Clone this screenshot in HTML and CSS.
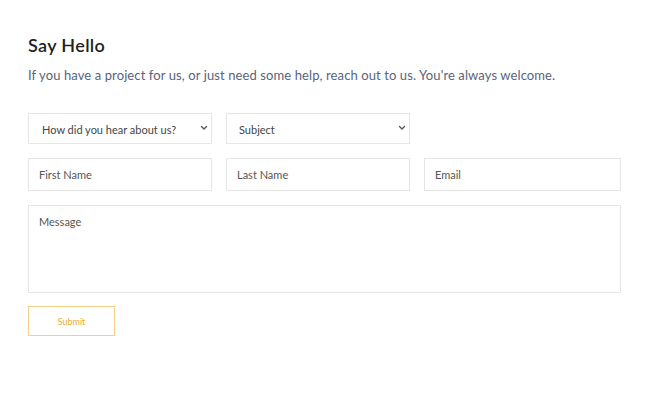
FILE: index.html
```html
<!DOCTYPE html>
<html lang="en">
<head>
<meta charset="utf-8">
<title>Say Hello</title>
<link rel="stylesheet" href="styles.css">
</head>
<body>
<main class="contact">
  <h1 class="title">Say Hello</h1>
  <p class="lead">If you have a project for us, or just need some help, reach out to us. You're always welcome.</p>
  <form class="form">
    <div class="row row-selects">
      <div class="select-wrap">
        <select class="field select select-first">
          <option>How did you hear about us?</option>
        </select>
        <svg class="chev" width="8" height="6" viewBox="0 0 8 6"><path d="M1.5 1.5 L4 4 L6.5 1.5" fill="none" stroke="#555" stroke-width="1.4" stroke-linecap="round" stroke-linejoin="round"/></svg>
      </div>
      <div class="select-wrap">
        <select class="field select">
          <option>Subject</option>
        </select>
        <svg class="chev" width="8" height="6" viewBox="0 0 8 6"><path d="M1.5 1.5 L4 4 L6.5 1.5" fill="none" stroke="#555" stroke-width="1.4" stroke-linecap="round" stroke-linejoin="round"/></svg>
      </div>
    </div>
    <div class="row row-inputs">
      <input class="field input" type="text" placeholder="First Name">
      <input class="field input" type="text" placeholder="Last Name">
      <input class="field input" type="email" placeholder="Email">
    </div>
    <textarea class="field message" placeholder="Message"></textarea>
    <button class="submit" type="button">Submit</button>
  </form>
</main>
</body>
</html>
```

FILE: styles.css
```css
* { box-sizing: border-box; }
html, body { margin: 0; padding: 0; background: #fff; }
body { font-family: "Lato", "Open Sans", sans-serif; }

.contact {
  padding: 34px 27px 0 28px;
  width: 648px;
}

.title {
  margin: 0;
  font-size: 18px;
  line-height: 22px;
  font-weight: 600;
  color: #1f1f24;
  letter-spacing: 0.35px;
}

.lead {
  margin: 11px 0 0;
  font-size: 13px;
  line-height: 16px;
  color: #58647a;
  letter-spacing: 0.1px;
}

.form {
  margin-top: 30px;
  display: flex;
  flex-direction: column;
}

.row {
  display: grid;
  grid-template-columns: 184px 184px 1fr;
  column-gap: 14px;
}

.row-inputs { margin-top: 14px; }

.field {
  font-family: inherit;
  font-size: 11px;
  color: #444;
  background: #fff;
  border: 1px solid #e6e6e6;
  border-radius: 0;
  outline: none;
  margin: 0;
}

.field::placeholder { color: #555; opacity: 1; }

.select-wrap { position: relative; }

.select {
  appearance: none;
  -webkit-appearance: none;
  width: 100%;
  height: 31px;
  padding: 1px 12px 0;
  color: #444;
}

.select-first { padding-left: 13px; }

.chev {
  position: absolute;
  right: 4px;
  top: 12px;
  pointer-events: none;
}

.input {
  height: 33px;
  padding: 0 10px;
  width: 100%;
}

.message {
  display: block;
  margin-top: 14px;
  width: 100%;
  height: 88px;
  padding: 9px 10px;
  resize: none;
}

.submit {
  margin-top: 13px;
  align-self: flex-start;
  width: 87px;
  height: 30px;
  background: #fff;
  border: 1px solid #f6cf86;
  color: #f0a92c;
  font-family: inherit;
  font-size: 9px;
  cursor: pointer;
}
```
